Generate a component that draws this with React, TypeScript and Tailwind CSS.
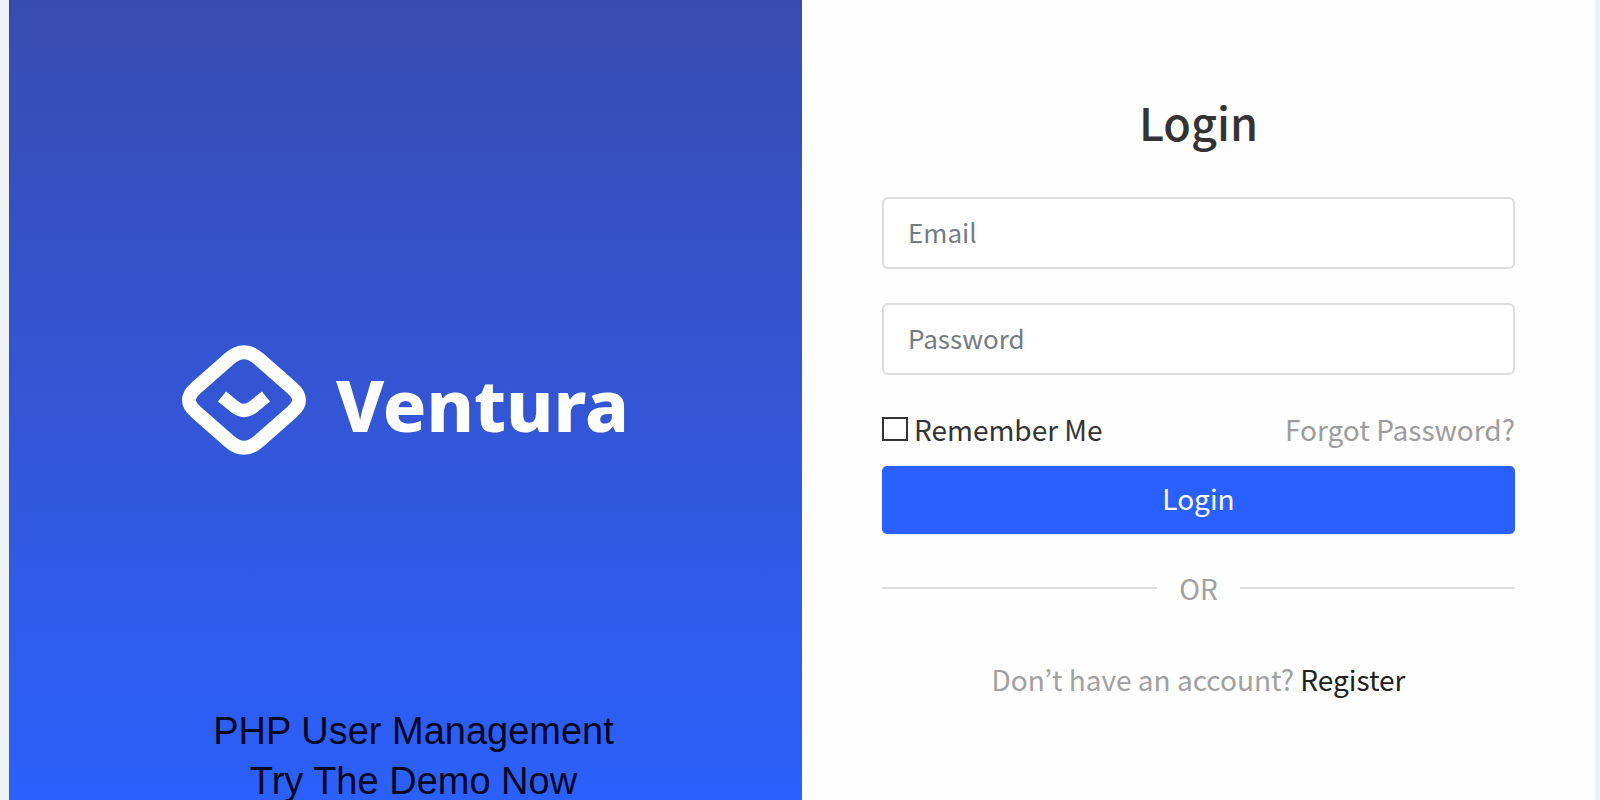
import { useState } from "react";

function VenturaMark() {
  return (
    <svg viewBox="0 0 124 110" className="w-[124px] shrink-0" fill="none" stroke="#fff" aria-hidden="true">
      <path
        strokeWidth="14"
        strokeLinejoin="round"
        d="M47 14 Q62 0.500 77 14 L110 43 Q124 55 110 67 L77 96 Q62 109.500 47 96 L14 67 Q0 55 14 43 Z"
      />
      <path strokeWidth="13" d="M40 51.5 L53 62 Q62 69 71 62 L84 51.500" />
    </svg>
  );
}

function BrandPanel() {
  return (
    <section className="grid grid-rows-[1fr_auto_1fr] justify-items-center overflow-hidden bg-linear-to-b from-[#384bb0] to-[#2a60fc]">
      <div />
      <div className="flex items-center gap-[30px]">
        <VenturaMark />
        <span className="pt-2 font-['Noto_Sans',sans-serif] text-[72px] leading-[80px] font-extrabold text-white">
          Ventura
        </span>
      </div>
      <p className="-mb-1.5 self-end pl-4 text-center font-['Liberation_Sans',sans-serif] text-[38px] leading-[50px] text-[#03061c]">
        PHP User Management
        <br />
        Try The Demo Now
      </p>
    </section>
  );
}

const fieldClass =
  "h-[72px] w-full rounded-md border-2 border-[#dcdcdc] bg-white px-6 pb-1 text-[26px] text-[#333] outline-none placeholder:text-[#757b82] focus:border-[#2a60fc]";

export default function App() {
  const [remember, setRemember] = useState(false);

  return (
    <main className="grid h-screen grid-cols-2 bg-[#eef1f4] pr-[5px] pl-[9px] font-['Noto_Sans_CJK_KR',sans-serif]">
      <BrandPanel />
      <section className="bg-[#fefefe] px-20 pt-[92px]">
        <form onSubmit={(event) => event.preventDefault()}>
          <h1 className="text-center text-[45px] leading-[60px] font-medium text-[#333]">Login</h1>
          <input type="email" aria-label="Email" placeholder="Email" className={`mt-[45px] ${fieldClass}`} />
          <input
            type="password"
            aria-label="Password"
            placeholder="Password"
            className={`mt-[34px] ${fieldClass}`}
          />
          <div className="mt-[34px] flex items-center justify-between text-[28px] leading-10">
            <span className="flex items-center gap-1.5">
              <input
                id="remember"
                type="checkbox"
                checked={remember}
                onChange={(event) => setRemember(event.target.checked)}
                className="h-6 w-[26px] appearance-none border-2 border-[#333] bg-white checked:bg-[#2a60fc]"
              />
              <label htmlFor="remember" className="text-[#333]">Remember Me</label>
            </span>
            <a href="#forgot" className="text-[#9c9c9c]">Forgot Password?</a>
          </div>
          <button type="submit" className="mt-[17px] h-[68px] w-full rounded-[5px] bg-[#2a60ff] pb-1 text-[28px] text-white">
            Login
          </button>
        </form>
        <div className="mt-[34px] flex items-center gap-[22px] text-[28px] leading-10 text-[#a0a0a0]">
          <span className="h-0.5 grow bg-[#dfdfdf]" />
          OR
          <span className="h-0.5 grow bg-[#dfdfdf]" />
        </div>
        <p className="mt-[51px] text-center text-[28px] leading-10 text-[#a0a0a0]">
          Don’t have an account? <a href="#register" className="text-[#222]">Register</a>
        </p>
      </section>
    </main>
  );
}
